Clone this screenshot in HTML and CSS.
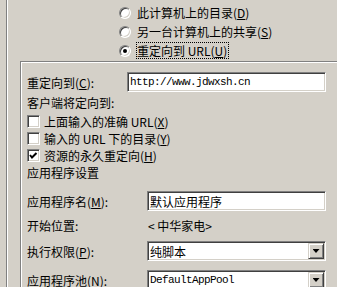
FILE: index.html
```html
<!DOCTYPE html>
<html lang="zh-CN">
<head>
  <meta charset="UTF-8" />
  <title>主目录</title>
  <link rel="stylesheet" href="styles.css">
</head>
<body>
  <div class="page">
    <div class="radios">
      <div class="radio-row"><span class="radio"></span><span>此计算机上的目录(<u>D</u>)</span></div>
      <div class="radio-row"><span class="radio"></span><span>另一台计算机上的共享(<u>S</u>)</span></div>
      <div class="radio-row"><span class="radio checked"></span><span class="focus">重定向到 URL(<u>U</u>)</span></div>
    </div>

    <div class="group">
      <div class="field">
        <span class="label wide">重定向到(<u>C</u>):</span>
        <div class="input long mono">http://www.jdwxsh.cn</div>
      </div>
      <div class="line tall">客户端将定向到:</div>
      <div class="check-row"><span class="check"></span>上面输入的准确 URL(<u>X</u>)</div>
      <div class="check-row"><span class="check"></span>输入的 URL 下的目录(<u>Y</u>)</div>
      <div class="check-row">
        <span class="check">
          <svg viewBox="0 0 11 11" width="11" height="11"><polyline points="2,5 4,7.5 8.5,3" fill="none" stroke="#000" stroke-width="2"/></svg>
        </span>资源的永久重定向(<u>H</u>)
      </div>
      <div class="line">应用程序设置</div>

      <div class="field spaced">
        <span class="label">应用程序名(<u>M</u>):</span>
        <div class="input">默认应用程序</div>
      </div>
      <div class="field plain">
        <span class="label">开始位置:</span>
        <span class="start">&lt; 中华家电&gt;</span>
      </div>
      <div class="field near">
        <span class="label">执行权限(<u>P</u>):</span>
        <div class="input select">纯脚本<span class="drop"></span></div>
      </div>
      <div class="field mid">
        <span class="label">应用程序池(<u>N</u>):</span>
        <div class="input select"><span class="mono">DefaultAppPool</span><span class="drop"></span></div>
      </div>
    </div>
  </div>
</body>
</html>
```

FILE: styles.css
```css
body { margin: 0; padding-left: 6px; background: #d4d0c8; color: #000; font: 12px/17px "Noto Sans CJK SC", sans-serif; height: 287px; overflow: hidden; }
u { text-decoration: underline; text-underline-offset: 1px; }
.page { border-left: 1px solid #808080; box-shadow: inset 1px 0 #fff; height: 287px; overflow: hidden; }

/* radio choices */
.radios { padding: 3px 0 0 112px; }
.radio-row { display: flex; align-items: center; height: 19px; }
.radio { position: relative; flex: none; width: 12px; height: 12px; box-sizing: border-box; margin-right: 6px; border-radius: 50%; background: #fff; border: 1px solid; border-color: #808080 #fff #fff #808080; box-shadow: inset 1px 1px #404040, inset -1px -1px #d4d0c8; }
.radio.checked::after { content: ""; position: absolute; left: 3px; top: 3px; width: 4px; height: 4px; border-radius: 50%; background: #000; }
.focus { margin-left: -1px; padding-right: 1px; border: 1px dotted #000; line-height: 15px; }

/* group frame */
.group { margin: 1px 0 0 13px; padding: 10px 0 0 6px; border-top: 1px solid #808080; border-left: 1px solid #808080; box-shadow: inset 1px 1px #fff; }
.field { display: flex; align-items: center; height: 20px; }
.field.spaced { margin-top: 10px; }
.field.plain { height: 28px; }
.field.near { margin-top: 2px; }
.field.mid { margin-top: 9px; }
.label { flex: none; width: 120px; }
.label.wide { width: 100px; }
.start { padding-left: 1px; }

.input { display: flex; align-items: center; width: 179px; height: 20px; box-sizing: border-box; padding-left: 2px; background: #fff; border: 1px solid; border-color: #808080 #fff #fff #808080; box-shadow: inset 1px 1px #404040, inset -1px -1px #d4d0c8; white-space: nowrap; }
.input.long { width: 199px; }
.mono { font-family: "Liberation Mono", monospace; font-size: 11px; letter-spacing: -0.6px; }
.select { padding-right: 1px; }
.drop { display: flex; align-items: center; justify-content: center; margin-left: auto; width: 16px; height: 16px; box-sizing: border-box; background: #d4d0c8; border: 1px solid; border-color: #d4d0c8 #404040 #404040 #d4d0c8; box-shadow: inset 1px 1px #fff, inset -1px -1px #808080; }
.drop::before { content: ""; width: 7px; height: 4px; background: #000; clip-path: polygon(0 0, 100% 0, 50% 100%); }

.line { height: 17px; }
.line.tall { height: 21px; line-height: 21px; }
.check-row { display: flex; align-items: center; height: 17px; }
.check { display: flex; align-items: center; justify-content: center; flex: none; width: 13px; height: 13px; box-sizing: border-box; margin-right: 4px; background: #fff; border: 1px solid; border-color: #808080 #fff #fff #808080; box-shadow: inset 1px 1px #404040, inset -1px -1px #d4d0c8; }
.check svg { display: block; }
```
